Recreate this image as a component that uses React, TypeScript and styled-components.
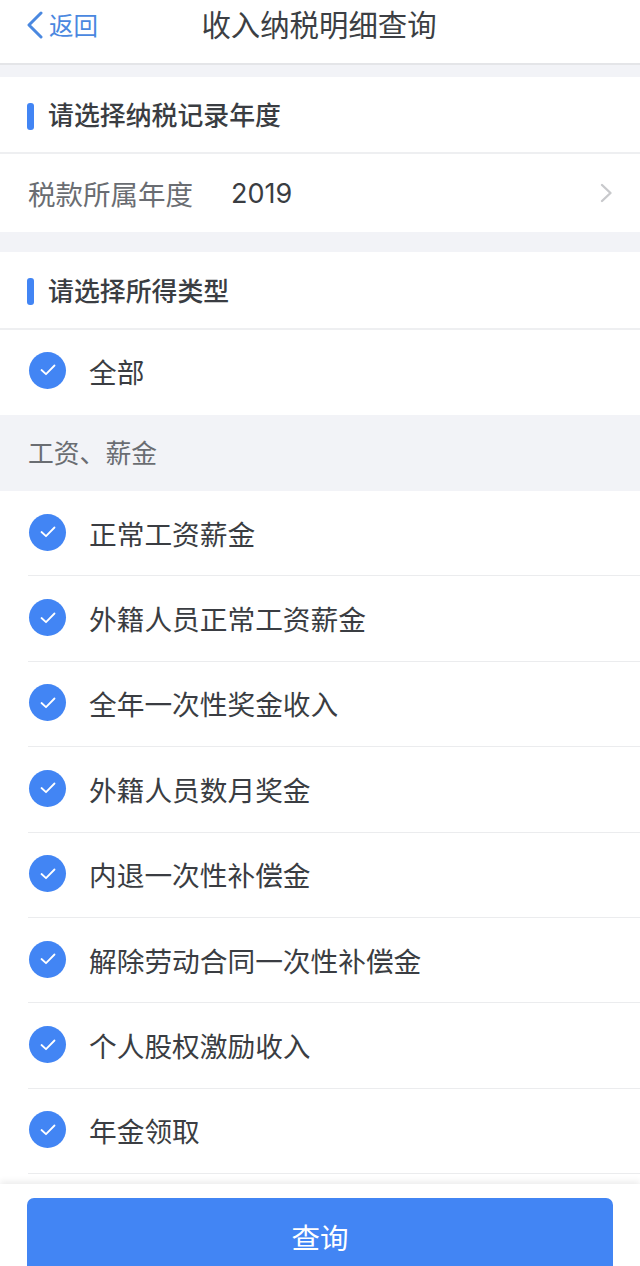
import React from "react";
import styled, { createGlobalStyle } from "styled-components";

const Global = createGlobalStyle`
  html, body { margin: 0; padding: 0; background: #fff; }
  body { font-family: "Noto Sans CJK SC", "Noto Sans", sans-serif; }
  * { box-sizing: border-box; }
`;

const Page = styled.div`
  position: relative;
  width: 640px;
  height: 1266px;
  overflow: hidden;
  background: #fff;
  color: #3a3d42;
`;

const Header = styled.header`
  position: relative;
  height: 65px;
  display: flex;
  align-items: center;
  justify-content: center;
  border-bottom: 2px solid #e4e5e8;
  padding: 0 2px 17px 0;
`;

const Back = styled.div`
  position: absolute;
  left: 26px;
  top: 10px;
  display: flex;
  align-items: center;
  gap: 6px;
  color: #4a88e0;
  font-size: 24.5px;
  line-height: 30px;
`;

const Title = styled.h1`
  margin: 0;
  font-size: 29.4px;
  font-weight: 400;
  line-height: 40px;
  color: #3c3f44;
`;

const Gap = styled.div<{ $h: number }>`
  height: ${(p) => p.$h}px;
  background: #f2f3f7;
`;

const SectionHead = styled.div<{ $h: number; $lift: number }>`
  height: ${(p) => p.$h}px;
  display: flex;
  align-items: center;
  gap: 14px;
  padding: 0 0 ${(p) => p.$lift}px 27px;
  border-bottom: 2px solid #eeeff1;
  font-size: 25.9px;
  font-weight: 500;
  color: #3a3d42;
`;

const Marker = styled.span<{ $drop: number }>`
  width: 7px;
  height: 27px;
  margin-top: ${(p) => p.$drop}px;
  border-radius: 3px;
  background: #4285f4;
`;

const YearRow = styled.div`
  height: 78px;
  display: flex;
  align-items: center;
  padding: 0 27px 0 28px;
  font-size: 27.5px;
`;

const YearLabel = styled.span`
  width: 203px;
  color: #6a6d72;
`;

const YearValue = styled.span`
  flex: 1;
  font-family: "Inter", "Noto Sans", sans-serif;
  font-size: 27px;
  color: #3a3d42;
`;

const AllRow = styled.div`
  height: 85px;
  display: flex;
  align-items: center;
  gap: 23px;
  padding: 0 0 4px 29px;
  font-size: 27.7px;
`;

const Group = styled.div`
  height: 76px;
  display: flex;
  align-items: center;
  padding: 0 0 3px 28px;
  background: #f2f3f7;
  font-size: 25.8px;
  color: #6a6d72;
`;

const List = styled.div`
  padding-left: 28px;
`;

const Item = styled.div`
  height: 85.4px;
  display: flex;
  align-items: center;
  gap: 23px;
  padding: 0 0 1px 1px;
  border-bottom: 1.5px solid #ebecee;
  font-size: 27.7px;
  color: #3a3d42;
`;

const Check = styled.span`
  flex: none;
  width: 37px;
  height: 37px;
  margin-top: -1px;
  border-radius: 50%;
  background: #4285f4;
  display: flex;
  align-items: center;
  justify-content: center;
`;

const Footer = styled.div`
  position: absolute;
  left: 0;
  right: 0;
  bottom: 0;
  height: 82px;
  background: #fff;
  padding: 14px 27px 0 27px;
  box-shadow: 0 -3px 6px rgba(0, 0, 0, 0.07);
`;

const QueryButton = styled.div`
  height: 80px;
  border-radius: 7px;
  background: #4285f4;
  color: #fff;
  font-size: 28.5px;
  display: flex;
  justify-content: center;
  padding-top: 17px;
  line-height: 44px;
`;

const Tick = () => (
  <Check>
    <svg width="16" height="12" viewBox="0 0 16 12" fill="none">
      <path d="M1.5 6 L6 10.2 L14.5 1.5" stroke="#fff" strokeWidth="1.8" strokeLinecap="round" strokeLinejoin="round" />
    </svg>
  </Check>
);

const items = [
  "正常工资薪金",
  "外籍人员正常工资薪金",
  "全年一次性奖金收入",
  "外籍人员数月奖金",
  "内退一次性补偿金",
  "解除劳动合同一次性补偿金",
  "个人股权激励收入",
  "年金领取",
];

export default function App() {
  return (
    <Page>
      <Global />
      <Header>
        <Back>
          <svg width="17" height="28" viewBox="0 0 17 28" fill="none">
            <path d="M15 2 L3 14 L15 26" stroke="#4a88e0" strokeWidth="3" strokeLinecap="round" strokeLinejoin="round" />
          </svg>
          <span>返回</span>
        </Back>
        <Title>收入纳税明细查询</Title>
      </Header>
      <Gap $h={12} />
      <SectionHead $h={77} $lift={3}>
        <Marker $drop={6} />
        请选择纳税记录年度
      </SectionHead>
      <YearRow>
        <YearLabel>税款所属年度</YearLabel>
        <YearValue>2019</YearValue>
        <svg width="13" height="20" viewBox="0 0 13 20" fill="none">
          <path d="M2 2 L10.5 10 L2 18" stroke="#c8c9cc" strokeWidth="2.4" strokeLinecap="round" strokeLinejoin="round" />
        </svg>
      </YearRow>
      <Gap $h={20} />
      <SectionHead $h={78} $lift={1}>
        <Marker $drop={4} />
        请选择所得类型
      </SectionHead>
      <AllRow>
        <Tick />
        全部
      </AllRow>
      <Group>工资、薪金</Group>
      <List>
        {items.map((t) => (
          <Item key={t}>
            <Tick />
            {t}
          </Item>
        ))}
      </List>
      <Footer>
        <QueryButton>查询</QueryButton>
      </Footer>
    </Page>
  );
}
